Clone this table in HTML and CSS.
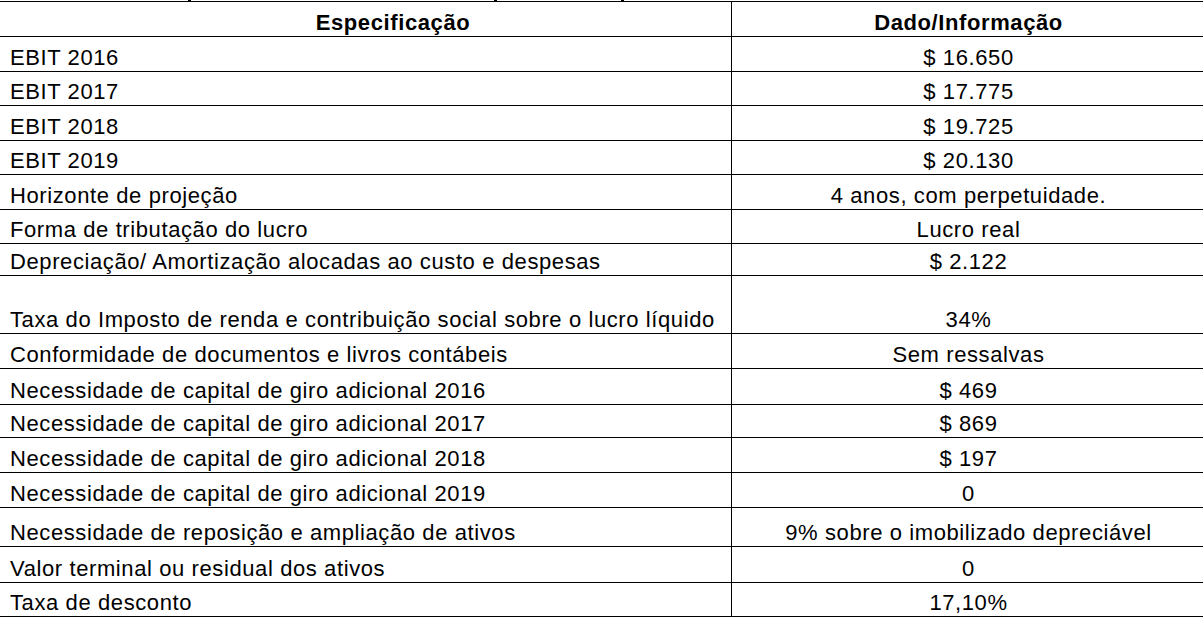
FILE: index.html
```html
<!DOCTYPE html>
<html lang="pt-BR">
<head>
<meta charset="utf-8">
<title>Especificação</title>
<link rel="stylesheet" href="styles.css">
</head>
<body>
<div class="title-tail"><span class="tick t1"></span><span class="tick t2"></span><span class="tick t3"></span></div>
<div class="table">
  <div class="row head h35"><div class="cell left">Especificação</div><div class="cell right">Dado/Informação</div></div>
  <div class="row h35"><div class="cell left">EBIT 2016</div><div class="cell right">$ 16.650</div></div>
  <div class="row h34"><div class="cell left">EBIT 2017</div><div class="cell right">$ 17.775</div></div>
  <div class="row h35"><div class="cell left">EBIT 2018</div><div class="cell right">$ 19.725</div></div>
  <div class="row h34"><div class="cell left">EBIT 2019</div><div class="cell right">$ 20.130</div></div>
  <div class="row h35"><div class="cell left">Horizonte de projeção</div><div class="cell right">4 anos, com perpetuidade.</div></div>
  <div class="row h34"><div class="cell left">Forma de tributação do lucro</div><div class="cell right">Lucro real</div></div>
  <div class="row h32"><div class="cell left">Depreciação/ Amortização alocadas ao custo e despesas</div><div class="cell right">$ 2.122</div></div>
  <div class="row h58"><div class="cell left">Taxa do Imposto de renda e contribuição social sobre o lucro líquido</div><div class="cell right">34%</div></div>
  <div class="row h35"><div class="cell left">Conformidade de documentos e livros contábeis</div><div class="cell right">Sem ressalvas</div></div>
  <div class="row h36"><div class="cell left">Necessidade de capital de giro adicional 2016</div><div class="cell right">$ 469</div></div>
  <div class="row h33"><div class="cell left">Necessidade de capital de giro adicional 2017</div><div class="cell right">$ 869</div></div>
  <div class="row h35"><div class="cell left">Necessidade de capital de giro adicional 2018</div><div class="cell right">$ 197</div></div>
  <div class="row h35"><div class="cell left">Necessidade de capital de giro adicional 2019</div><div class="cell right">0</div></div>
  <div class="row h39"><div class="cell left">Necessidade de reposição e ampliação de ativos</div><div class="cell right">9% sobre o imobilizado depreciável</div></div>
  <div class="row h36"><div class="cell left">Valor terminal ou residual dos ativos</div><div class="cell right">0</div></div>
  <div class="row h34"><div class="cell left">Taxa de desconto</div><div class="cell right">17,10%</div></div>
</div>
</body>
</html>
```

FILE: styles.css
```css
html, body {
  margin: 0;
  padding: 0;
  background: #fff;
  overflow: hidden;
}
body {
  font-family: "Liberation Sans", Arial, sans-serif;
  font-size: 22px;
  letter-spacing: 0.6px;
  color: #000;
  width: 1203px;
  height: 617px;
}
.title-tail {
  height: 1px;
  display: flex;
}
.tick {
  display: block;
  width: 3px;
  height: 1px;
  background: #000;
}
.t1 { margin-left: 188px; }
.t2 { margin-left: 303px; }
.t3 { margin-left: 124px; }

.table {
  width: 1205px;
  border-top: 1px solid #000;
}
.row {
  display: flex;
  box-sizing: border-box;
  border-bottom: 1px solid #000;
}
.h32 { height: 32px; }
.h33 { height: 33px; }
.h34 { height: 34px; }
.h35 { height: 35px; }
.h36 { height: 36px; }
.h39 { height: 39px; }
.h58 { height: 58px; }

.cell {
  display: flex;
  align-items: flex-end;
  line-height: 23px;
  padding-bottom: 2.5px;
  box-sizing: border-box;
  white-space: nowrap;
}
.left {
  width: 732px;
  flex: 0 0 732px;
  border-right: 1px solid #000;
  padding-left: 10px;
}
.right {
  flex: 1;
  justify-content: center;
}
.head .cell {
  font-weight: bold;
}
.head .left {
  justify-content: center;
  padding-left: 55px;
}
```
